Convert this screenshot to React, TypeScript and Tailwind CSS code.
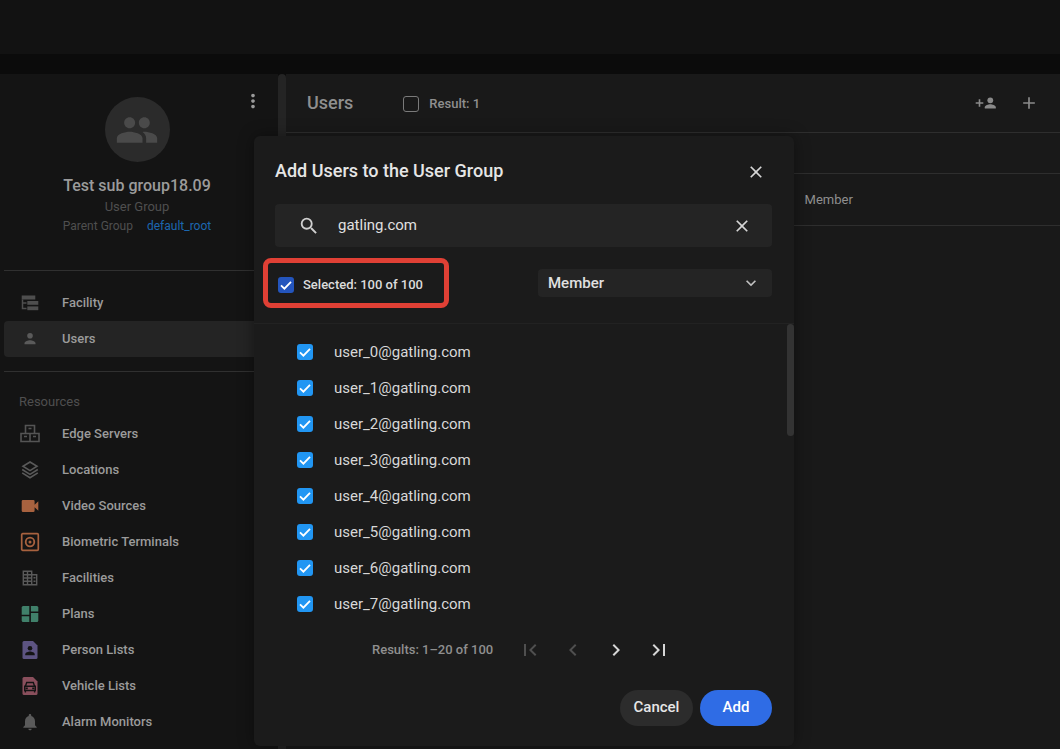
import { useState, type ComponentType, type ReactNode } from "react";
import {
  MdAdd,
  MdChevronLeft,
  MdChevronRight,
  MdClose,
  MdExpandMore,
  MdFirstPage,
  MdGroup,
  MdLastPage,
  MdMoreVert,
  MdNotifications,
  MdSearch,
} from "react-icons/md";

type IconProps = { className?: string };

type NavItem = {
  label: string;
  icon: ComponentType<IconProps>;
  color: string;
  active?: boolean;
};

function Svg({ className, children }: { className?: string; children: ReactNode }) {
  return (
    <svg viewBox="0 0 20 20" fill="none" stroke="currentColor" className={className} aria-hidden="true">
      {children}
    </svg>
  );
}

function FacilityIcon({ className }: IconProps) {
  return (
    <Svg className={className}>
      <g fill="currentColor" stroke="none">
        <rect x="1.7" y="2.5" width="13.6" height="4" />
        <rect x="7.3" y="8" width="11" height="3.8" />
        <rect x="7.3" y="13.4" width="11" height="3.8" />
      </g>
      <path d="M2.5 6.500v9h4M2.500 10h4" strokeWidth="1.5" />
    </Svg>
  );
}

function SmallPersonIcon({ className }: IconProps) {
  return (
    <Svg className={className}>
      <g fill="currentColor" stroke="none">
        <circle cx="10" cy="6.800" r="2.800" />
        <path d="M4.500 15.300v-1.200c0-1.900 3.600-2.900 5.500-2.900s5.500 1 5.500 2.900v1.200z" />
      </g>
    </Svg>
  );
}

function ServersIcon({ className }: IconProps) {
  return (
    <Svg className={className}>
      <path d="M5.5 1.500h9v8h-9zM1 9.500h9v8H1zM10 9.500h9v8h-9z" strokeWidth="1.6" />
      <path d="M8.500 4.500h3M4 12.500h3M13 12.500h3" strokeWidth="1.4" />
    </Svg>
  );
}

function LayersIcon({ className }: IconProps) {
  return (
    <Svg className={className}>
      <path
        d="M10 2l7 4.300-7 4.300-7-4.300zM2.200 9.500L10 14.400l7.800-4.900M2.200 12.900L10 17.800l7.800-4.900"
        strokeWidth="1.6"
      />
    </Svg>
  );
}

function VideoIcon({ className }: IconProps) {
  return (
    <Svg className={className}>
      <path
        d="M3 4h10.300a1.300 1.300 0 0 1 1.300 1.300V8.800L18.300 5.200v9.600L14.600 11.200v3.500a1.300 1.300 0 0 1-1.300 1.300H3a1.300 1.300 0 0 1-1.300-1.300V5.300A1.300 1.300 0 0 1 3 4z"
        fill="currentColor"
        stroke="none"
      />
    </Svg>
  );
}

function TerminalIcon({ className }: IconProps) {
  return (
    <Svg className={className}>
      <rect x="1.700" y="1.700" width="16.600" height="16.600" rx="1" strokeWidth="1.700" />
      <circle cx="10" cy="10" r="4.300" strokeWidth="1.800" />
      <circle cx="10" cy="10" r="1.500" fill="currentColor" stroke="none" />
    </Svg>
  );
}

function BuildingIcon({ className }: IconProps) {
  return (
    <Svg className={className}>
      <path
        d="M3.300 3.300h8.400v13.400H3.300zM11.700 6.700h5v10h-5M7.500 3.300v13.400M3.300 6.700h8.400M3.300 10h8.400M3.300 13.300h8.400"
        strokeWidth="1.400"
      />
      <path d="M13.500 9.800h2M13.500 13.200h2" strokeWidth="1.500" />
    </Svg>
  );
}

function PlansIcon({ className }: IconProps) {
  return (
    <Svg className={className}>
      <g fill="currentColor" stroke="none">
        <path d="M3.200 2h6.100v8.800H1.700V3.500A1.500 1.500 0 0 1 3.200 2z" />
        <path d="M10.900 2h5.900a1.500 1.500 0 0 1 1.500 1.500v3.900h-7.400z" />
        <path d="M1.700 12.300h7.600V18H3.200a1.500 1.500 0 0 1-1.500-1.500z" />
        <path d="M10.900 9h7.400v7.500a1.500 1.500 0 0 1-1.500 1.500h-5.900z" />
      </g>
    </Svg>
  );
}

function PersonListIcon({ className }: IconProps) {
  return (
    <Svg className={className}>
      <path
        d="M4 1h9l4.500 4.500v12A1.500 1.500 0 0 1 16 19H4a1.500 1.500 0 0 1-1.500-1.500v-15A1.500 1.500 0 0 1 4 1z"
        fill="currentColor"
        stroke="none"
      />
      <g fill="#141414" stroke="none">
        <circle cx="10" cy="8.200" r="2.300" />
        <path d="M5.300 15.300v-1c0-1.800 2.900-2.700 4.700-2.700s4.700.9 4.700 2.700v1z" />
      </g>
    </Svg>
  );
}

function VehicleListIcon({ className }: IconProps) {
  return (
    <Svg className={className}>
      <path
        d="M4 1h9l4.500 4.500v12A1.500 1.500 0 0 1 16 19H4a1.500 1.500 0 0 1-1.500-1.500v-15A1.500 1.500 0 0 1 4 1z"
        fill="currentColor"
        stroke="none"
      />
      <path
        d="M5.300 10.500l1.400-4h6.600l1.400 4M4.700 10.300h10.600v4.200H4.700zM5.400 14.500v2M14.600 14.500v2"
        stroke="#141414"
        strokeWidth="1.400"
      />
      <path d="M5.500 12.400h2.300M12.200 12.400h2.300" stroke="#141414" strokeWidth="1.700" />
    </Svg>
  );
}

function AddPersonIcon({ className }: IconProps) {
  return (
    <svg viewBox="0 0 22 16" fill="currentColor" className={className} aria-hidden="true">
      <path d="M3.700 4.200h1.600v3h3v1.600h-3v3H3.700v-3h-3V7.200h3z" />
      <circle cx="15.300" cy="5.300" r="2.900" />
      <path d="M9.800 13.500v-1.300c0-1.900 3.600-2.900 5.500-2.900s5.500 1 5.500 2.900v1.300z" />
    </svg>
  );
}

const MAIN_NAV: NavItem[] = [
  { label: "Facility", icon: FacilityIcon, color: "text-[#4e4e4e]" },
  { label: "Users", icon: SmallPersonIcon, color: "text-[#5a5a5a]", active: true },
];

const RESOURCES: NavItem[] = [
  { label: "Edge Servers", icon: ServersIcon, color: "text-[#545454]" },
  { label: "Locations", icon: LayersIcon, color: "text-[#5a5a5a]" },
  { label: "Video Sources", icon: VideoIcon, color: "text-[#a8623f]" },
  { label: "Biometric Terminals", icon: TerminalIcon, color: "text-[#a8623f]" },
  { label: "Facilities", icon: BuildingIcon, color: "text-[#5a5a5a]" },
  { label: "Plans", icon: PlansIcon, color: "text-[#40806a]" },
  { label: "Person Lists", icon: PersonListIcon, color: "text-[#5d5482]" },
  { label: "Vehicle Lists", icon: VehicleListIcon, color: "text-[#8a4f5c]" },
  { label: "Alarm Monitors", icon: MdNotifications, color: "text-[#5a5a5a]" },
];

const USERS = Array.from({ length: 8 }, (_, i) => `user_${i}@gatling.com`);

function NavList({ items }: { items: NavItem[] }) {
  return (
    <ul>
      {items.map(({ label, icon: Icon, color, active }) => (
        <li key={label}>
          <a
            href="#"
            aria-current={active ? "page" : undefined}
            className={`flex h-9 items-center gap-[22px] rounded-l pl-4 text-[13px] font-medium text-[#9b9b9b] ${
              active ? "bg-[#242424]" : ""
            }`}
          >
            <Icon className={`size-5 shrink-0 ${color}`} />
            {label}
          </a>
        </li>
      ))}
    </ul>
  );
}

function Checkbox({
  id,
  checked,
  onChange,
  color = "checked:bg-[#2196f3]",
}: {
  id: string;
  checked: boolean;
  onChange: (checked: boolean) => void;
  color?: string;
}) {
  return (
    <span className="grid size-4 shrink-0 place-items-center">
      <input
        id={id}
        type="checkbox"
        checked={checked}
        onChange={(e) => onChange(e.target.checked)}
        className={`col-start-1 row-start-1 size-4 appearance-none rounded-[3px] border border-[#7a7a7a] checked:border-0 ${color}`}
      />
      {checked && (
        <svg
          viewBox="0 0 16 16"
          fill="none"
          stroke="#ffffff"
          strokeWidth="1.8"
          className="pointer-events-none col-start-1 row-start-1 size-4"
          aria-hidden="true"
        >
          <path d="M3 8.300l3.400 3.400L13 4.800" />
        </svg>
      )}
    </span>
  );
}

function Sidebar() {
  return (
    <aside className="w-[278px] shrink-0 bg-[#141414] pl-1">
      <div className="relative flex flex-col items-center pt-[23px] pr-2">
        <button aria-label="More actions" className="absolute top-4 right-[14px] text-[#9b9b9b]">
          <MdMoreVert className="size-[22px]" />
        </button>
        <div className="flex size-[65px] items-center justify-center rounded-full bg-[#2b2b2b]">
          <MdGroup className="size-11 text-[#4a4a4a]" />
        </div>
        <h2 className="mt-3 text-base leading-6 font-medium text-[#9b9b9b]">Test sub group18.09</h2>
        <p className="text-[13px] leading-[18px] text-[#4f4f4f]">User Group</p>
        <p className="flex gap-[14px] text-xs leading-5 text-[#4f4f4f]">
          Parent Group
          <a href="#" className="text-[#1c67b0]">
            default_root
          </a>
        </p>
      </div>
      <nav aria-label="Group" className="mt-[34px] border-y border-[#303030] py-[14px]">
        <NavList items={MAIN_NAV} />
      </nav>
      <nav aria-label="Resources" className="pt-5">
        <h3 className="mb-1 pl-[15px] text-[13px] leading-5 text-[#4f4f4f]">Resources</h3>
        <NavList items={RESOURCES} />
      </nav>
    </aside>
  );
}

function AddUsersDialog() {
  const [query, setQuery] = useState("gatling.com");
  const [selected, setSelected] = useState<string[]>(USERS);
  const allSelected = selected.length === USERS.length;

  function toggle(user: string, checked: boolean) {
    setSelected((prev) => (checked ? [...prev, user] : prev.filter((u) => u !== user)));
  }

  return (
    <div
      role="dialog"
      aria-labelledby="dialog-title"
      className="w-full max-w-[540px] rounded-md bg-[#1b1b1b] pb-5 shadow-[0_0_16px_rgba(0,0,0,0.4)]"
    >
      <div className="flex items-start justify-between pt-5 pr-6 pl-[21px]">
        <h2 id="dialog-title" className="text-lg leading-[30px] font-medium text-[#e6e6e6]">
          Add Users to the User Group
        </h2>
        <button aria-label="Close" className="p-[6px] pr-1 text-[#d6d6d6]">
          <MdClose className="size-5" />
        </button>
      </div>

      <div className="mt-4 mr-[22px] ml-[21px] flex h-[43px] items-center rounded bg-[#242424] pr-5 pl-[23px]">
        <MdSearch className="size-[22px] shrink-0 text-[#cfcfcf]" />
        <input
          type="text"
          aria-label="Search users"
          value={query}
          onChange={(e) => setQuery(e.target.value)}
          className="ml-[18px] min-w-0 flex-1 bg-transparent text-[15px] text-[#e0e0e0] outline-none"
        />
        <button aria-label="Clear search" onClick={() => setQuery("")} className="text-[#d6d6d6]">
          <MdClose className="size-5" />
        </button>
      </div>

      <div className="mt-[11px] flex items-center justify-between pr-[22px] pl-[9px]">
        <label
          htmlFor="select-all"
          className="flex h-[50px] items-center gap-[9px] rounded-lg border-5 border-[#e04035] pt-1 pr-[21px] pl-[10px] text-[13px] font-medium text-[#dcdcdc]"
        >
          <Checkbox
            id="select-all"
            checked={allSelected}
            onChange={(checked) => setSelected(checked ? USERS : [])}
            color="checked:bg-[#2455bd]"
          />
          Selected: 100 of 100
        </label>
        <div className="relative w-[234px]">
          <select
            aria-label="Role"
            className="h-7 w-full appearance-none rounded bg-[#242424] px-[10px] text-[15px] font-medium text-[#e0e0e0]"
          >
            <option>Member</option>
          </select>
          <MdExpandMore className="pointer-events-none absolute top-1 right-[11px] size-5 text-[#c0c0c0]" />
        </div>
      </div>

      <div className="relative mt-[15px] border-t border-[#222222] pt-[10px]">
        <ul>
          {USERS.map((user) => (
            <li key={user}>
              <label
                htmlFor={user}
                className="flex h-9 items-center gap-[21px] pl-[43px] text-[15px] text-[#d8d8d8]"
              >
                <Checkbox id={user} checked={selected.includes(user)} onChange={(c) => toggle(user, c)} />
                {user}
              </label>
            </li>
          ))}
        </ul>
        <div className="absolute top-0 right-0 h-28 w-[7px] rounded bg-[#333333]" />
      </div>

      <nav aria-label="Pagination" className="mt-[10px] flex h-9 items-center pl-[118px] text-[#d6d6d6]">
        <span className="mr-[25px] text-[13px] font-medium text-[#8f8f8f]">Results: 1–20 of 100</span>
        <span className="flex gap-[19px]">
          <button aria-label="First page" disabled className="text-[#4f4f4f]">
            <MdFirstPage className="size-6" />
          </button>
          <button aria-label="Previous page" disabled className="text-[#4f4f4f]">
            <MdChevronLeft className="size-6" />
          </button>
          <button aria-label="Next page">
            <MdChevronRight className="size-6" />
          </button>
          <button aria-label="Last page">
            <MdLastPage className="size-6" />
          </button>
        </span>
      </nav>

      <div className="mt-[22px] flex justify-end gap-[7px] pr-[22px] text-[15px] font-medium">
        <button className="h-9 w-[73px] rounded-full bg-[#2c2c2c] pb-[2px] text-[#e6e6e6]">Cancel</button>
        <button className="h-9 w-[72px] rounded-full bg-[#2f6ce5] pb-[2px] text-white">Add</button>
      </div>
    </div>
  );
}

export default function App() {
  const [resultChecked, setResultChecked] = useState(false);

  return (
    <div className="relative flex min-h-screen flex-col bg-[#0b0b0b] font-[Roboto,sans-serif]">
      <header className="h-[54px] bg-[#121212]" />

      <div className="mt-5 flex flex-1">
        <Sidebar />
        <div className="w-2 shrink-0 rounded-t bg-[#242424]" />
        <main className="min-w-0 flex-1 bg-[#191919]">
          <div className="flex h-[59px] items-center border-b border-[#2e2e2e] px-[21px]">
            <h1 className="text-lg font-medium text-[#8f8f8f]">Users</h1>
            <label
              htmlFor="result"
              className="ml-[50px] flex items-center gap-[10px] pt-[2px] text-[13px] font-medium text-[#8f8f8f]"
            >
              <Checkbox id="result" checked={resultChecked} onChange={setResultChecked} />
              Result: 1
            </label>
            <button aria-label="Add existing user" className="ml-auto text-[#8a8a8a]">
              <AddPersonIcon className="h-4 w-[22px]" />
            </button>
            <button aria-label="Create user" className="ml-[22px] text-[#8a8a8a]">
              <MdAdd className="size-5" />
            </button>
          </div>
          <table className="mt-10 w-full text-left text-[13px] text-[#8f8f8f]">
            <thead>
              <tr className="h-[52px] border-y border-[#2e2e2e]">
                <td className="w-[67%]" />
                <th scope="col" className="font-normal">
                  Member
                </th>
              </tr>
            </thead>
          </table>
        </main>
      </div>

      <div className="absolute inset-0 flex items-start justify-center pt-[136px] pr-3">
        <AddUsersDialog />
      </div>
    </div>
  );
}
